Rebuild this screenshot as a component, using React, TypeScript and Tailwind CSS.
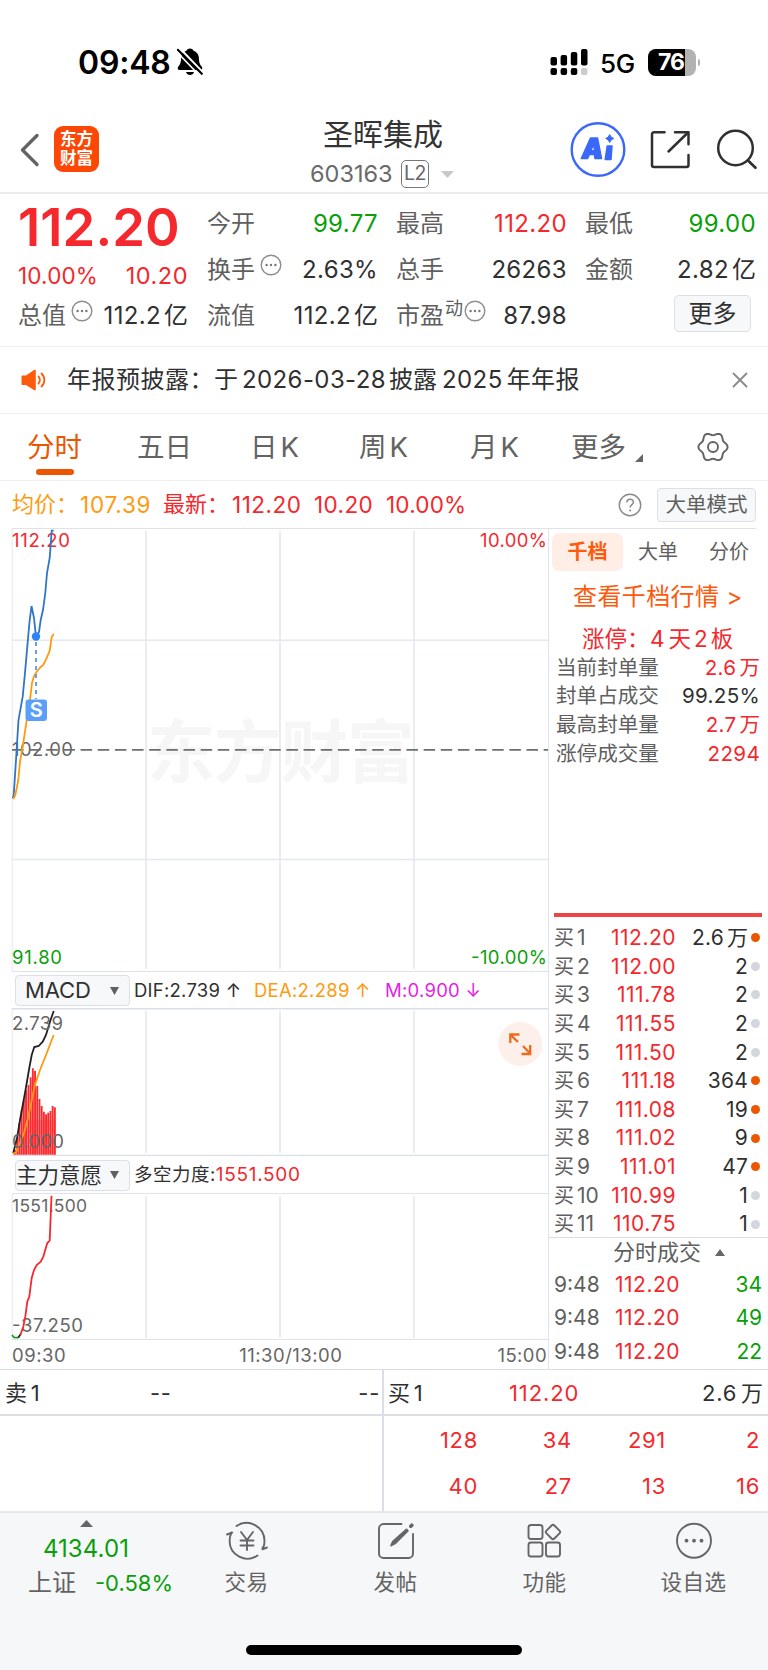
import type { ReactNode } from 'react';

const RED = '#f4282d';
const GRID = '#e4e8ef';

const DEPTH = [
  { name: '买1', price: '112.20', qty: '2.6万', hot: true },
  { name: '买2', price: '112.00', qty: '2', hot: false },
  { name: '买3', price: '111.78', qty: '2', hot: false },
  { name: '买4', price: '111.55', qty: '2', hot: false },
  { name: '买5', price: '111.50', qty: '2', hot: false },
  { name: '买6', price: '111.18', qty: '364', hot: true },
  { name: '买7', price: '111.08', qty: '19', hot: true },
  { name: '买8', price: '111.02', qty: '9', hot: true },
  { name: '买9', price: '111.01', qty: '47', hot: true },
  { name: '买10', price: '110.99', qty: '1', hot: false },
  { name: '买11', price: '110.75', qty: '1', hot: false },
];

const TRADES = ['34', '49', '22'];

const LIMIT_STATS = [
  { label: '当前封单量', value: '2.6万', red: true },
  { label: '封单占成交', value: '99.25%', red: false },
  { label: '最高封单量', value: '2.7万', red: true },
  { label: '涨停成交量', value: '2294', red: true },
];

const MACD_BARS = [
  [15, 1150], [17.3, 1138], [19.4, 1123], [21.6, 1110], [23.8, 1100], [26, 1090], [28.4, 1085], [30.6, 1077.3],
  [32.8, 1068.3], [35, 1071], [37.2, 1086], [39.4, 1099], [41.6, 1106], [43.8, 1111.7], [46, 1114.3], [48.2, 1112.7],
  [50.4, 1111], [52.6, 1106], [54.8, 1107.3],
];

const GEAR = Array.from({ length: 90 }, (_, i) => {
  const a = (i * Math.PI) / 45;
  const r = 13.2 + 1.4 * Math.cos(6 * a);
  return `${(16 + r * Math.cos(a)).toFixed(2)},${(16 + r * Math.sin(a)).toFixed(2)}`;
}).join(' ');

/* Splits a trailing Chinese unit off a figure so that it gets its own gap. */
function Figure({ value }: { value: string }) {
  const unit = /[万亿]$/.test(value) ? value.slice(-1) : '';
  return (
    <>
      {unit ? value.slice(0, -1) : value}
      {unit && <span className="ml-[3px] tracking-normal">{unit}</span>}
    </>
  );
}

function Dots({ className }: { className?: string }) {
  return (
    <svg viewBox="0 0 22 22" className={`h-[22px] w-[22px] shrink-0 ${className ?? ''}`}>
      <circle cx="11" cy="11" r="9.8" fill="none" stroke="#8e8e8e" strokeWidth="1.4" />
      <circle cx="6.600" cy="11" r="1.2" fill="#777" />
      <circle cx="11" cy="11" r="1.2" fill="#777" />
      <circle cx="15.400" cy="11" r="1.2" fill="#777" />
    </svg>
  );
}

function Quote({ label, value, tone, children }: { label: string; value: string; tone: string; children?: ReactNode }) {
  return (
    <div className="flex h-[46px] items-center">
      <span className="text-[24px] text-[#5f5f5f]">{label}</span>
      {children}
      <span className={`-mr-[1px] ml-auto text-[24px] tracking-[0.350px] ${tone}`}><Figure value={value} /></span>
    </div>
  );
}

function StatusBar() {
  return (
    <div className="flex h-[100px] items-start pt-[42px]">
      <span className="ml-[78px] w-[92px] text-[32px] leading-[41px] font-semibold tracking-[-0.2px] text-black">09:48</span>
      <svg viewBox="0 0 26 28" className="mt-[6px] ml-[7px] h-[28px] w-[26px]">
        <path d="M13 .4c2 0 3 1 3.3 2 3.500 1.200 5.500 4 5.600 7.600.1 5 1.200 7 3 8.700.8.900.4 3.300-1.400 3.300H2.500C.7 22 .3 19.600 1.100 18.700c1.800-1.700 2.900-3.700 3-8.700.1-3.600 2.100-6.400 5.600-7.600.3-1 1.300-2 3.300-2z" fill="#000" />
        <path d="M9 24h8c-.6 1.900-2 3-4 3s-3.400-1.100-4-3z" fill="#000" />
        <path d="M2.500 0l24 25" stroke="#fff" strokeWidth="2.200" />
        <path d="M.8 1.800l24 24" stroke="#000" strokeWidth="2.200" strokeLinecap="round" />
        <path d="M0 4l22 23" stroke="#fff" strokeWidth="1.600" />
      </svg>
      <svg viewBox="0 0 38 28" className="mt-[7px] ml-auto h-[28px] w-[38px]">
        <rect x="0.500" y="8" width="6.500" height="8.500" rx="2" />
        <rect x="10.600" y="6" width="6.500" height="10.500" rx="2" />
        <rect x="20.800" y="3" width="6.500" height="13.500" rx="2" />
        <rect x="31" y="0" width="6.500" height="16.500" rx="2" />
        <rect x="0.500" y="19" width="6.500" height="7" rx="2" />
        <rect x="10.600" y="19" width="6.500" height="7" rx="2" />
        <rect x="20.800" y="19" width="6.500" height="7" rx="2" />
        <rect x="31" y="19" width="6.500" height="7" rx="2" fill="#ccc" />
      </svg>
      <span className="ml-[12px] w-[36px] text-[26px] leading-[43px] font-medium tracking-[-0.3px] text-black">5G</span>
      <div className="relative mt-[7px] ml-[12px] flex h-[27px] w-[48px] items-center overflow-hidden rounded-[8px] bg-[#b2b2b2]">
        <div className="absolute inset-y-0 left-0 w-[37px] bg-black" />
        <span className="relative ml-[10px] text-[23px] leading-[27px] font-bold tracking-[-1px] text-white">76</span>
      </div>
      <div className="mt-[17px] mr-[68px] ml-[2px] h-[7px] w-[2px] rounded-r-full bg-[#b2b2b2]" />
    </div>
  );
}

function Header() {
  return (
    <div className="flex h-[94px] items-start border-b-2 border-[#ececec]">
      <svg viewBox="0 0 20 34" className="mt-[33px] ml-[20px] h-[34px] w-[20px] shrink-0">
        <path d="M17 2.500L2.500 17 17 31.500" fill="none" stroke="#636363" strokeWidth="3.400" strokeLinecap="round" strokeLinejoin="round" />
      </svg>
      <div className="mt-[26px] ml-[14px] flex h-[46px] w-[45px] shrink-0 flex-col items-center justify-center rounded-[9px] bg-[#fd4805] text-[16.500px] leading-[19px] font-bold text-white">
        <span>东方</span>
        <span>财富</span>
      </div>
      <div className="ml-[197px] flex w-[170px] shrink-0 flex-col items-start">
        <span className="mt-[14px] ml-[27px] text-[30px] leading-[40px] whitespace-nowrap text-[#333]">圣晖集成</span>
        <div className="mt-[5px] flex h-[30px] items-center self-stretch pl-[14px]">
          <span className="w-[83px] text-[23.500px] text-[#6a6a6a]">603163</span>
          <span className="ml-[8px] flex h-[28px] w-[28px] shrink-0 items-center justify-center rounded-[5px] border border-[#777] text-[19.500px] tracking-[-0.5px] text-[#666]">L2</span>
          <svg viewBox="0 0 13 7" className="ml-[12px] h-[7px] w-[13px] shrink-0"><path d="M0 0h13L6.500 7z" fill="#c9c9c9" /></svg>
        </div>
      </div>
      <svg viewBox="0 0 56 56" className="mt-[21px] ml-auto h-[56px] w-[56px] shrink-0">
        <circle cx="28" cy="28.500" r="26.300" fill="none" stroke="#3a68f8" strokeWidth="2.400" />
        <path d="M20.500 17h7L31.500 37.500h-6.500l-.6-4h-5l-1.800 4h-6.300z M23.800 22.500l-2.900 7.200h3.500z" fill="#3a68f8" fillRule="evenodd" stroke="#3a68f8" strokeWidth="1.500" strokeLinejoin="round" />
        <path d="M37.200 25h4.800l-1 13.500h-5.800z" fill="#3a68f8" stroke="#3a68f8" strokeWidth="1.500" strokeLinejoin="round" />
        <path d="M39.700 13.500l1.400 2.600 2.600 1.400-2.600 1.400-1.400 2.600-1.400-2.600-2.600-1.400 2.600-1.400z" fill="#3a68f8" stroke="#3a68f8" strokeLinejoin="round" />
      </svg>
      <svg viewBox="0 0 40 40" className="mt-[30px] ml-[24px] h-[40px] w-[40px] shrink-0">
        <g fill="none" stroke="#303030" strokeWidth="2.500" strokeLinecap="round" strokeLinejoin="round">
          <path d="M14.500 2.200H4a2 2 0 0 0-2 2V35a2 2 0 0 0 2 2h32.500a2 2 0 0 0 2-2V25" />
          <path d="M25 2.200h13.500v12" />
          <path d="M18.500 21.500L37.500 3" />
        </g>
      </svg>
      <svg viewBox="0 0 42 42" className="mt-[29px] mr-[10px] ml-[26px] h-[42px] w-[42px] shrink-0">
        <circle cx="19.500" cy="19" r="17.300" fill="none" stroke="#303030" strokeWidth="2.500" />
        <path d="M32 31.500l7.500 7.200" stroke="#303030" strokeWidth="2.700" strokeLinecap="round" />
      </svg>
    </div>
  );
}

function QuoteBlock() {
  return (
    <div className="flex h-[153px] gap-[19px] border-b border-[#f0f0f0] pt-[6.500px] pl-[18px]">
      <div className="flex w-[170px] flex-col">
        <span className="h-[52px] text-[52.500px] leading-[52px] font-semibold tracking-[0.100px] whitespace-nowrap text-[#f4282d]">112.20</span>
        <div className="mt-[3px] flex h-[40px] items-center justify-between text-[#f4282d]">
          <span className="text-[22.500px] tracking-[0.150px]">10.00%</span>
          <span className="text-[23.500px] tracking-[0.500px]">10.20</span>
        </div>
        <div className="-mt-[3px] flex h-[46px] items-center">
          <span className="text-[24px] text-[#5f5f5f]">总值</span>
          <Dots className="-mt-[10px] ml-[5px]" />
          <span className="ml-auto text-[24px] tracking-[0.350px] text-[#303030]"><Figure value="112.2亿" /></span>
        </div>
      </div>
      <div className="w-[170px]">
        <Quote label="今开" value="99.77" tone="text-[#0a9f0a]" />
        <Quote label="换手" value="2.63%" tone="text-[#303030]"><Dots className="-mt-[10px] ml-[5px]" /></Quote>
        <Quote label="流值" value="112.2亿" tone="text-[#303030]" />
      </div>
      <div className="w-[170px]">
        <Quote label="最高" value="112.20" tone="text-[#f4282d]" />
        <Quote label="总手" value="26263" tone="text-[#303030]" />
        <Quote label="市盈" value="87.98" tone="text-[#303030]">
          <span className="-mt-[14px] ml-[1px] text-[18px] text-[#5f5f5f]">动</span>
          <Dots className="-mt-[10px] ml-px" />
        </Quote>
      </div>
      <div className="w-[170px]">
        <Quote label="最低" value="99.00" tone="text-[#0a9f0a]" />
        <Quote label="金额" value="2.82亿" tone="text-[#303030]" />
        <div className="mt-[2.500px] ml-[89px] flex h-[37px] w-[77px] items-center justify-center rounded-[5px] border border-[#dcdfe6] bg-[#f7f8fa] text-[24px] text-[#303030]">更多</div>
      </div>
    </div>
  );
}

function Notice() {
  return (
    <div className="flex h-[67px] items-center border-b border-[#f0f0f0]">
      <svg viewBox="0 0 26 22" className="ml-[21px] h-[22px] w-[26px]">
        <path d="M1.500 6.500h3.500L13 1c1-.6 1.800-.2 1.800 1v18c0 1.200-.8 1.600-1.800 1L5 16H1.500C.8 16 .5 15.600.5 15V7.500c0-.6.300-1 1-1z" fill="#fd5a0c" />
        <path d="M17.500 7.500c1.800 1.800 1.800 5.200 0 7M20.500 4.500c3.800 3.500 3.800 9.500 0 13" fill="none" stroke="#fd5a0c" strokeWidth="1.800" strokeLinecap="round" />
      </svg>
      <div className="ml-[20px] flex items-baseline text-[24px] text-[#303030]">
        <span className="w-[147px] tracking-[0.500px]">年报预披露：</span>
        <span>于</span>
        <span className="ml-[4px] tracking-[0.400px]">2026-03-28</span>
        <span className="ml-[3px]">披露</span>
        <span className="ml-[5px] tracking-[0.400px]">2025</span>
        <span className="ml-[4px] tracking-[0.500px]">年年报</span>
      </div>
      <svg viewBox="0 0 16 16" className="mr-[20px] ml-auto h-[16px] w-[16px]">
        <path d="M1.500 1.500l13 13M14.500 1.500l-13 13" stroke="#8b8b8b" strokeWidth="1.900" strokeLinecap="round" />
      </svg>
    </div>
  );
}

function Tabs() {
  return (
    <div className="flex h-[67px] items-center border-b border-[#f0f0f0] pt-[1px] text-[27.500px] text-[#636363]">
      <div className="relative ml-[27px] w-[110px] text-[#ec5600]">
        <span className="font-normal">分时</span>
        <div className="absolute top-[42px] left-[9px] h-[6px] w-[38px] rounded-full bg-[#ec5600]" />
      </div>
      <span className="w-[113px]">五日</span>
      <span className="w-[109px]">日<span className="ml-[3px]">K</span></span>
      <span className="w-[111px]">周<span className="ml-[3px]">K</span></span>
      <span className="w-[101px]">月<span className="ml-[3px]">K</span></span>
      <span className="flex w-[126px] items-center">
        更多
        <svg viewBox="0 0 8 8" className="mt-[20px] ml-[9px] h-[8px] w-[8px]"><path d="M8 0v8H0z" fill="#666" /></svg>
      </span>
      <svg viewBox="0 0 32 32" className="-mt-[2px] h-[32px] w-[32px]" fill="none" stroke="#636363" strokeWidth="1.900" strokeLinejoin="round">
        <polygon points={GEAR} />
        <circle cx="16" cy="16" r="5" />
      </svg>
    </div>
  );
}

function InfoLine() {
  return (
    <div className="flex h-[47px] items-center text-[22px] text-[#f4282d]">
      <span className="ml-[12px] w-[68px] text-[#ff9a0e]">均价：</span>
      <span className="w-[83px] text-[22.500px] tracking-[0.800px] text-[#ff9a0e]">107.39</span>
      <span className="w-[69px]">最新：</span>
      <span className="w-[82px] text-[22.500px] tracking-[0.500px]">112.20</span>
      <span className="w-[72px] text-[22.500px] tracking-[0.400px]">10.20</span>
      <span className="text-[22.500px] tracking-[0.200px]">10.00%</span>
      <svg viewBox="0 0 24 24" className="ml-auto h-[24px] w-[24px]">
        <circle cx="12" cy="12" r="10.700" fill="none" stroke="#8b8b8b" strokeWidth="1.500" />
        <path d="M8.800 9.500c0-4.300 6.600-4.300 6.600-.3 0 2.300-3.300 2.500-3.300 5.300" fill="none" stroke="#8b8b8b" strokeWidth="1.500" />
        <circle cx="12.100" cy="17.500" r="1" fill="#8b8b8b" />
      </svg>
      <span className="mr-[12px] ml-[15px] flex h-[34px] w-[99px] items-center justify-center rounded-[4px] border border-[#dcdfe6] bg-[#f7f8fa] pt-[2px] text-[20.500px] text-[#5f5f5f]">大单模式</span>
    </div>
  );
}

function Verticals({ top, bottom }: { top: number; bottom: number }) {
  return (
    <g stroke={GRID} strokeWidth="1.600">
      <path d={`M146 ${top}V${bottom}M280 ${top}V${bottom}M414 ${top}V${bottom}`} />
      <path d={`M12.200 ${top - 2}V${bottom + 2}`} strokeWidth="1" />
    </g>
  );
}

function PriceChart() {
  return (
    <svg viewBox="0 528 548 444" className="block h-[444px] w-[548px]">
      <text x="147" y="777" fontSize="68" fontWeight="700" fill="#f6f6f6" textLength="268">东方财富</text>
      <Verticals top={531} bottom={969} />
      <path d="M12 528.500H549M12 971.500H549" stroke="#dfe2e9" strokeWidth="1.200" />
      <path d="M12 640.300H549M12 859.500H549" stroke={GRID} strokeWidth="1.400" />
      <g fontSize="18.500" fill={RED}>
        <text x="12" y="547" textLength="58">112.20</text>
        <text x="480" y="547" textLength="67">10.00%</text>
        <g fill="#0a9f0a">
          <text x="12" y="964" textLength="50">91.80</text>
          <text x="471" y="964" textLength="76">-10.00%</text>
        </g>
        <text x="12" y="756" fill="#666" textLength="61">102.00</text>
      </g>
      <path d="M12 749.800H549" stroke="#6e6e6e" strokeWidth="1.800" strokeDasharray="11.500 5.650" />
      <path d="M12.700 798.300L13.700 795L16 760L18.500 720L22.700 696.700L25 673L27.300 646.700L29.500 622L31.500 606L34 618L36 637L39 632L40.700 620L43 610L45.300 593L47 573L49.700 558L51.700 530.700H53.700" fill="none" stroke="#2f76c4" strokeWidth="1.800" strokeLinejoin="miter" />
      <path d="M13.300 799L15.300 795L18.300 780L20 761.700L22.700 746.700L27.300 716.700L30 700L32 683L34 676L36.700 671.700L40.700 667L43.300 665L46.700 658L49.700 650.700L51.700 637L53.700 634" fill="none" stroke="#ff9a0e" strokeWidth="1.800" />
      <path d="M36 642V699" stroke="#4690f7" strokeWidth="1.700" strokeDasharray="4 4" />
      <circle cx="36" cy="636.500" r="4.200" fill="#2f83f7" />
      <rect x="25.500" y="699.500" width="21.500" height="21.500" rx="3" fill="#5c9ffa" />
      <text x="36.200" y="717" fontSize="20" fontWeight="600" fill="#fff" textAnchor="middle">S</text>
    </svg>
  );
}

function MacdChart() {
  return (
    <svg viewBox="0 1008 548 148" className="block h-[148px] w-[548px]">
      <Verticals top={1011} bottom={1153} />
      <path d="M12 1008.700H549M12 1155.500H549" stroke="#dadee6" strokeWidth="1.500" />
      {MACD_BARS.map(([x, y]) => (
        <rect key={x} x={x - 0.900} y={y} width="1.900" height={1154.700 - y} fill="#fb2a2e" />
      ))}
      <path d="M14 1154.700H56V1120H24z" fill="#fb2a2e" opacity="0.250" />
      <path d="M13.300 1153L17.300 1136.700L20 1120L25 1093L29.300 1068L31.700 1055L34.300 1047L38.700 1046L42.700 1041.700L46 1035L50 1021.700L53.700 1011" fill="none" stroke="#222" strokeWidth="1.800" />
      <path d="M12.700 1153.700L16 1152.700L20 1143L24 1133L28.300 1116.700L31.700 1100L35 1085L40 1070L46 1055L53.700 1035" fill="none" stroke="#ff9a0e" strokeWidth="1.800" />
      <g fontSize="18.500" fill="#666">
        <text x="12" y="1029.500" textLength="51">2.739</text>
        <text x="12" y="1148" textLength="52">0.000</text>
      </g>
      <circle cx="520.300" cy="1044" r="22" fill="#fdf0ea" />
      <path d="M518 1042L510.500 1034.800M510.300 1043V1034.500H519.500M523 1046L530 1053.300M521.500 1054H530.200V1045" fill="none" stroke="#ee6a1c" strokeWidth="2.300" />
    </svg>
  );
}

function ForceChart() {
  return (
    <svg viewBox="0 1193 548 147" className="block h-[147px] w-[548px]">
      <Verticals top={1196} bottom={1338} />
      <path d="M12 1193.500H549M12 1339.700H549" stroke="#dfe2e9" strokeWidth="1.200" />
      <g fontSize="18.500" fill="#666">
        <text x="12" y="1212" fontSize="17.500" textLength="75">1551.500</text>
        <text x="12" y="1332" textLength="71">-37.250</text>
      </g>
      <path d="M12 1335L14 1337.500L18.300 1337.700" fill="none" stroke="#0a9f0a" strokeWidth="1.700" />
      <path d="M18.300 1337.700L20.700 1334" stroke="#222" strokeWidth="1.700" />
      <path d="M20.300 1335L23.300 1326.700L25.300 1316.700L27.300 1301.700L29.300 1296.700L31.700 1278L34 1270L36.700 1265L40.700 1261.700L43.300 1256.700L47.300 1243L49.700 1240.700L51.500 1195.700" fill="none" stroke={RED} strokeWidth="1.800" />
    </svg>
  );
}

function Selector({ text, className }: { text: string; className: string }) {
  return (
    <span className={`ml-[15px] flex h-[31px] w-[115px] shrink-0 items-center rounded-[4px] border border-[#dcdfe6] bg-[#f7f8fa] text-[#303030] ${className}`}>
      <span className="whitespace-nowrap">{text}</span>
      <svg viewBox="0 0 9 8" className="mr-[10px] ml-auto h-[8px] w-[9px]"><path d="M0 0h9L4.500 8z" fill="#606060" /></svg>
    </span>
  );
}

function Charts() {
  return (
    <div className="w-[548px] shrink-0">
      <PriceChart />
      <div className="flex h-[36px] items-center pt-[1px] text-[18.500px] tracking-[0.250px]">
        <Selector text="MACD" className="pl-[9px] text-[22px] tracking-[-0.100px]" />
        <span className="ml-[4px] w-[120px] whitespace-nowrap text-[#303030]">DIF:2.739 ↑</span>
        <span className="w-[131px] whitespace-nowrap text-[#ff9a0e]">DEA:2.289 ↑</span>
        <span className="whitespace-nowrap text-[#e41fe4]">M:0.900 ↓</span>
      </div>
      <MacdChart />
      <div className="flex h-[37px] items-center pt-[1px] text-[18.500px]">
        <Selector text="主力意愿" className="pl-0 text-[21.500px]" />
        <span className="ml-[4px] tracking-[0.500px] text-[#303030]">多空力度:</span>
        <span className="text-[19px] tracking-[0.700px] text-[#f4282d]">1551.500</span>
      </div>
      <ForceChart />
      <div className="flex h-[29px] items-center justify-between pt-[2px] pr-[1px] pl-[12px] text-[18.500px] tracking-[0.500px] text-[#666]">
        <span>09:30</span>
        <span className="ml-[18px]">11:30/13:00</span>
        <span className="tracking-[0.400px]">15:00</span>
      </div>
    </div>
  );
}

function OrderBook() {
  return (
    <div className="flex w-[220px] shrink-0 flex-col border-l border-[#e0e3ea]">
      <div className="mr-[12px] h-px bg-[#dfe2e9]" />
      <div className="mt-[4px] flex h-[38px] items-center pl-[3px] text-[20px] text-[#5f5f5f]">
        <span className="flex h-[38px] w-[71px] items-center justify-center rounded-[7px] bg-[#ffeee6] font-semibold text-[#fd5a0c]">千档</span>
        <span className="ml-[15px]">大单</span>
        <span className="ml-[31px]">分价</span>
      </div>
      <div className="mt-[6px] h-[40px] pl-[24px] text-[24px] leading-[40px] tracking-[0.400px] whitespace-nowrap text-[#fd5a0c]">查看千档行情 &gt;</div>
      <div className="mt-[6px] flex h-[32px] items-center pl-[33px] text-[22.500px] whitespace-nowrap text-[#f4282d]">
        <span className="w-[68px]">涨停：</span>
        <span>4</span>
        <span className="ml-[4px]">天</span>
        <span className="ml-[3px]">2</span>
        <span className="ml-[3px]">板</span>
      </div>
      <div className="-mt-[1px]">
        {LIMIT_STATS.map((s) => (
          <div key={s.label} className="flex h-[28.600px] items-center justify-between pr-[8px] pl-[7px] text-[20.600px]">
            <span className="text-[#5f5f5f]">{s.label}</span>
            <span className={s.red ? 'tracking-[0.300px] text-[#f4282d]' : 'tracking-[0.300px] text-[#303030]'}><Figure value={s.value} /></span>
          </div>
        ))}
      </div>
      <div className="mt-[145px] mr-[6px] ml-[5px] h-[4px] bg-[#ef4444]" />
      <div className="mt-[6px]">
        {DEPTH.map((d) => (
          <div key={d.name} className="flex h-[28.650px] items-center pl-[5px] text-[21px]">
            <span className="w-[51px] whitespace-nowrap text-[#5f5f5f]">
              <span className="mr-[3px] text-[20px]">买</span>
              {d.name.slice(1)}
            </span>
            <span className="w-[71px] text-right tracking-[0.500px] whitespace-nowrap text-[#f4282d]">{d.price}</span>
            <span className="w-[72px] text-right tracking-[0.200px] whitespace-nowrap text-[#303030]"><Figure value={d.qty} /></span>
            <span className={`ml-[3px] h-[9px] w-[9px] rounded-full ${d.hot ? 'bg-[#ec5600]' : 'bg-[#d3d6dc]'}`} />
          </div>
        ))}
      </div>
      <div className="-mt-[1px] h-px bg-[#dadee6]" />
      <div className="flex h-[29px] items-center pl-[64px] text-[22px] text-[#5f5f5f]">
        分时成交
        <svg viewBox="0 0 10 7" className="ml-[14px] h-[7px] w-[10px]"><path d="M0 7h10L5 0z" fill="#666" /></svg>
      </div>
      {TRADES.map((q) => (
        <div key={q} className="flex h-[34px] items-center pr-[6px] pl-[5px] text-[21px]">
          <span className="w-[61px] text-[#5f5f5f]">9:48</span>
          <span className="tracking-[0.500px] text-[#f4282d]">112.20</span>
          <span className="ml-auto text-[#0a9f0a]">{q}</span>
        </div>
      ))}
    </div>
  );
}

function Levels() {
  return (
    <div className="flex h-[142px] border-t border-[#dadee6] text-[22px] tracking-[0.700px] text-[#303030]">
      <div className="w-[384px] border-r-2 border-[#dadee6]">
        <div className="flex h-[46px] items-center border-b-2 border-[#dadee6] pt-[3px] pl-[5px]">
          <span className="w-[145px]">卖<span className="ml-[3px]">1</span></span>
          <span>--</span>
          <span className="mr-[2px] ml-auto">--</span>
        </div>
      </div>
      <div className="w-[384px]">
        <div className="flex h-[46px] items-center border-b-2 border-[#dadee6] pt-[3px] pr-[5px] pl-[4px]">
          <span className="w-[121px]">买<span className="ml-[3px]">1</span></span>
          <span className="tracking-[0.900px] text-[#f4282d]">112.20</span>
          <span className="ml-auto">2.6<span className="ml-[4px] tracking-normal">万</span></span>
        </div>
        <div className="grid grid-cols-4 pt-[1px] pr-[8px] text-right leading-[46px] text-[#f4282d]">
          {['128', '34', '291', '2', '40', '27', '13', '16'].map((v) => (
            <span key={v}>{v}</span>
          ))}
        </div>
      </div>
    </div>
  );
}

function NavItem({ label, children }: { label: string; children: ReactNode }) {
  return (
    <div className="flex w-[149px] shrink-0 flex-col items-center">
      <svg viewBox="0 0 42 42" className="h-[42px] w-[42px]" fill="none" stroke="#666" strokeWidth="1.900" strokeLinecap="round" strokeLinejoin="round">
        {children}
      </svg>
      <span className="mt-[5px] h-[30px] text-[21.500px] leading-[30px] tracking-[0.500px] text-[#636363]">{label}</span>
    </div>
  );
}

function BottomNav() {
  return (
    <div className="h-[159px] border-t-2 border-[#e6e7e9] bg-[#f6f7f9]">
      <div className="flex h-[90px] pt-[7px]">
        <div className="flex w-[172px] shrink-0 flex-col items-center">
          <svg viewBox="0 0 13 7" className="h-[7px] w-[13px]"><path d="M0 7h13L6.500 0z" fill="#666" /></svg>
          <span className="mt-[6px] h-[32px] text-[24px] leading-[32px] tracking-[0.100px] text-[#0a9f0a]">4134.01</span>
          <div className="mt-[2px] flex h-[32px] items-center self-stretch pl-[28px] leading-[32px] whitespace-nowrap">
            <span className="text-[24px] text-[#636363]">上证</span>
            <span className="ml-[19px] text-[22px] text-[#0a9f0a]">-0.58%</span>
          </div>
        </div>
        <NavItem label="交易">
          <path d="M10.500 6a18 18 0 0 1 28 15c0 3-.6 5.200-1.300 7M31.500 35.500A17.800 17.800 0 0 1 3.600 21c0-3.300.6-6 2-8.500M1 14.500l5.200-2-1 .3M41 27.500l-4.500 1.800v-1.500" />
          <path d="M15 12l6 8 6-8M14.500 20.500h13M14.500 25.500h13M21 20.500V30" />
        </NavItem>
        <NavItem label="发帖">
          <path d="M26.500 4H8.500A4.500 4.500 0 0 0 4 8.500v25A4.500 4.500 0 0 0 8.500 38h25a4.500 4.500 0 0 0 4.500-4.500V14" />
          <path d="M16.200 25.500l1.800-4L31.500 9.500l1.300 1.300L20 23.500z" fill="#666" />
          <path d="M35.800 6.200l1-1" strokeWidth="3.600" />
        </NavItem>
        <NavItem label="功能">
          <rect x="4.500" y="5" width="14" height="14" rx="2.500" />
          <rect x="4.500" y="22.500" width="14" height="14" rx="2.500" />
          <rect x="22" y="22.500" width="14" height="14" rx="2.500" />
          <rect x="23.400" y="6.400" width="11.200" height="11.200" rx="2" transform="rotate(45 29 12)" />
        </NavItem>
        <NavItem label="设自选">
          <circle cx="21" cy="20.700" r="17" />
          <g fill="#666" stroke="none">
            <circle cx="13.500" cy="20.700" r="1.900" />
            <circle cx="21" cy="20.700" r="1.900" />
            <circle cx="28.500" cy="20.700" r="1.900" />
          </g>
        </NavItem>
      </div>
      <div className="mt-[42px] ml-[246px] h-[10px] w-[276px] rounded-full bg-black" />
    </div>
  );
}

export default function App() {
  return (
    <div className="h-[1670px] w-[768px] overflow-hidden bg-white font-['Inter','Noto_Sans_CJK_SC',sans-serif] font-[398]">
      <StatusBar />
      <Header />
      <QuoteBlock />
      <Notice />
      <Tabs />
      <InfoLine />
      <div className="flex h-[841px]">
        <Charts />
        <OrderBook />
      </div>
      <Levels />
      <BottomNav />
    </div>
  );
}
